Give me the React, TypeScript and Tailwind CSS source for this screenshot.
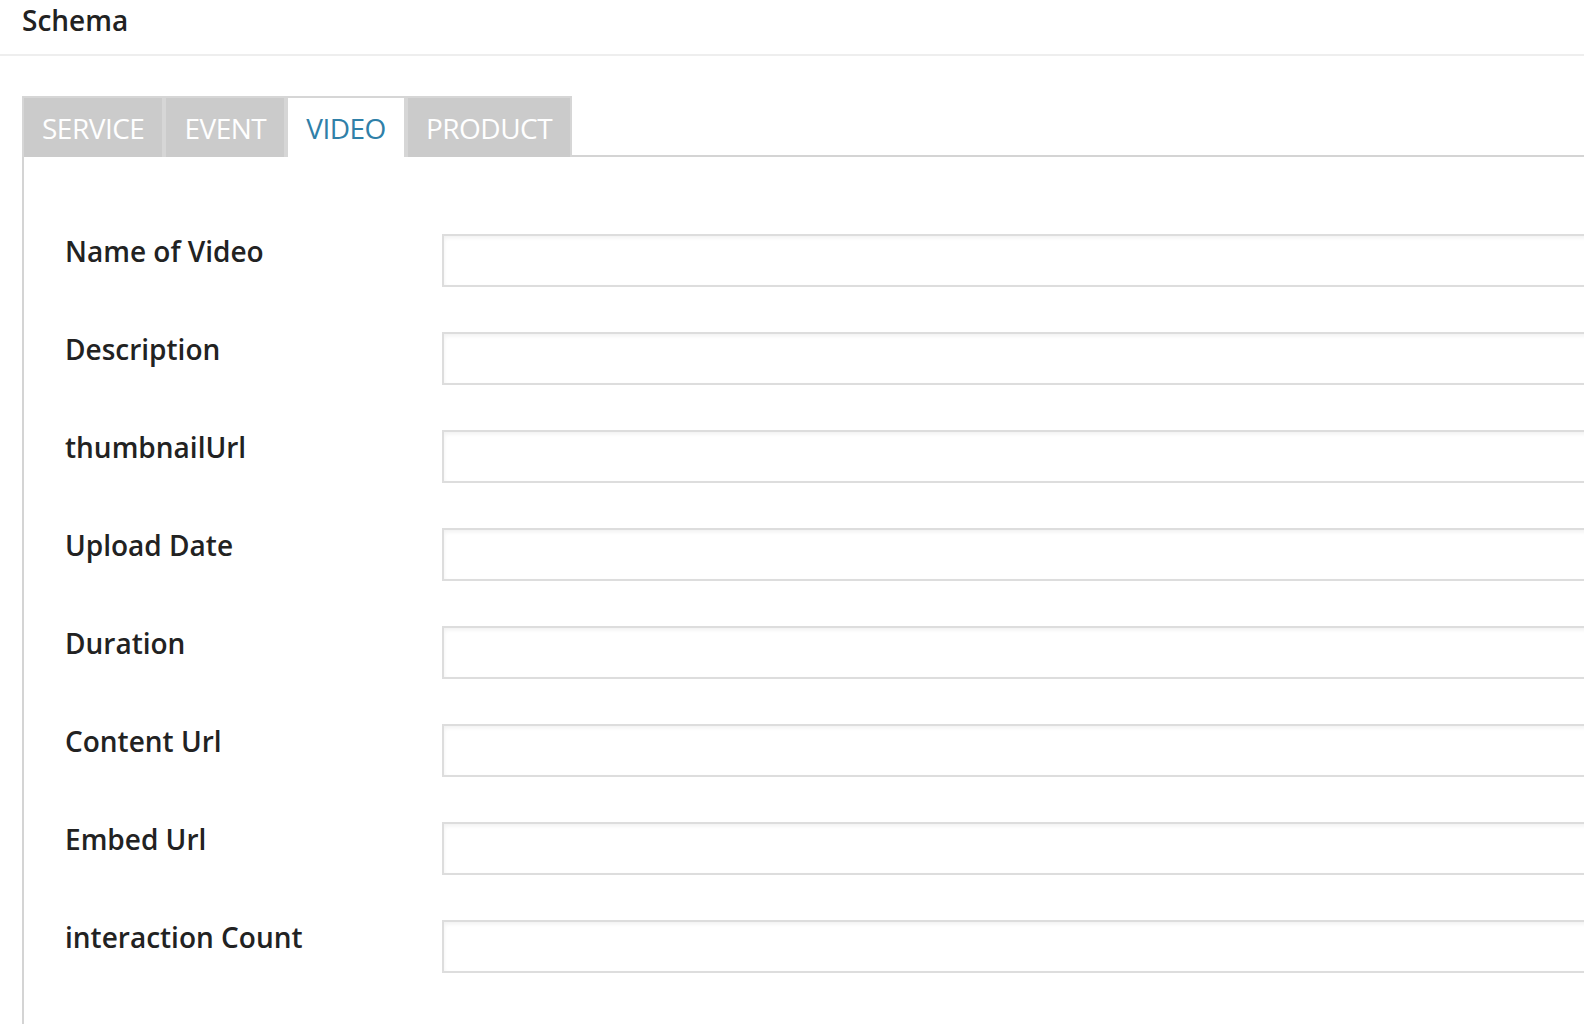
const tabs = ['Service', 'Event', 'Video', 'Product']

const fields = [
  'Name of Video',
  'Description',
  'thumbnailUrl',
  'Upload Date',
  'Duration',
  'Content Url',
  'Embed Url',
  'interaction Count',
]

export default function App() {
  const active = 'Video'

  return (
    <div className="h-[1024px] overflow-hidden bg-white font-['Open_Sans',sans-serif] text-[#222]">
      {/* Header */}
      <div className="h-[56px] border-b-2 border-[#eeeeee] pl-[22px] pt-[1px]">
        <h1 className="text-[28px] font-semibold leading-[38px]">Schema</h1>
      </div>

      <div className="ml-[22px] pt-[40px]">
        {/* Tabs */}
        <div className="relative z-10 -mb-[2px] flex">
          {tabs.map((t) => (
            <div
              key={t}
              className={
                t === active
                  ? 'flex h-[61px] items-center border-2 border-b-0 border-[#d6d6d6] bg-white px-[18px] text-[28px] uppercase leading-[38px] tracking-[-0.5px] text-[#2f80a8]'
                  : 'flex h-[61px] items-center border-2 border-b-0 border-[#d6d6d6] bg-[#cbcbcb] px-[18px] text-[28px] uppercase leading-[38px] tracking-[-0.5px] text-white'
              }
            >
              {t}
            </div>
          ))}
        </div>

        {/* Panel */}
        <div className="h-[900px] border-l-2 border-t-2 border-[#d4d4d4] pl-[41px] pt-[77px]">
          <div className="flex flex-col gap-[45px]">
            {fields.map((f) => (
              <div key={f} className="flex items-start">
                <label className="-mt-[2px] w-[377px] shrink-0 text-[28px] font-semibold leading-[38px]">
                  {f}
                </label>
                <input
                  type="text"
                  className="h-[53px] w-[1400px] shrink-0 border-2 border-[#dddddd] bg-white shadow-[inset_0_2px_4px_rgba(0,0,0,0.06)] outline-none"
                />
              </div>
            ))}
          </div>
        </div>
      </div>
    </div>
  )
}
